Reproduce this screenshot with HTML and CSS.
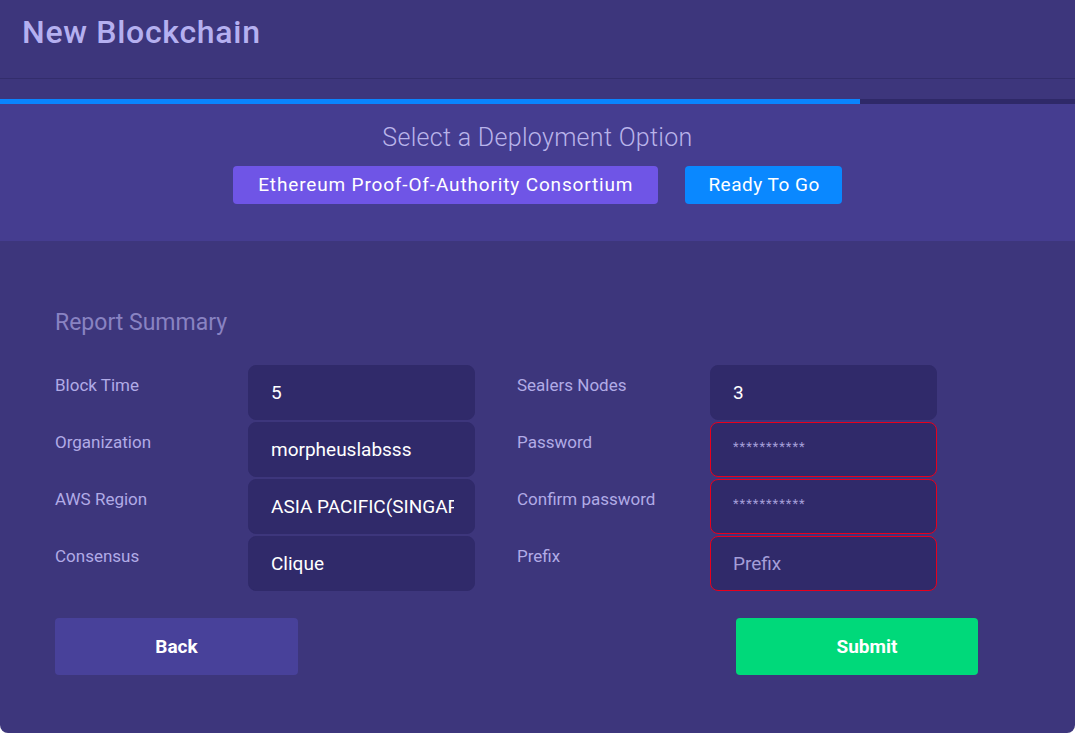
FILE: index.html
```html
<!DOCTYPE html>
<html lang="en">
<head>
    <meta charset="UTF-8">
    <meta name="viewport" content="width=device-width, initial-scale=1.0">
    <title>New Blockchain</title>
    <link rel="stylesheet" href="styles.css">
</head>
<body>
    <div class="modal">
        <div class="modal-header">
            <h1>New Blockchain</h1>
        </div>

        <div class="progress">
            <div class="progress-fill"></div>
        </div>

        <div class="deploy-section">
            <h2>Select a Deployment Option</h2>
            <div class="deploy-options">
                <span class="option option-purple">Ethereum Proof-Of-Authority Consortium</span>
                <span class="option option-blue">Ready To Go</span>
            </div>
        </div>

        <div class="summary">
            <h3>Report Summary</h3>
            <div class="form-grid">
                <div class="form-col">
                    <div class="form-row">
                        <label>Block Time</label>
                        <div class="field"><span class="value">5</span></div>
                    </div>
                    <div class="form-row">
                        <label>Organization</label>
                        <div class="field"><span class="value">morpheuslabsss</span></div>
                    </div>
                    <div class="form-row">
                        <label>AWS Region</label>
                        <div class="field"><span class="value">ASIA PACIFIC(SINGAPORE)</span></div>
                    </div>
                    <div class="form-row">
                        <label>Consensus</label>
                        <div class="field"><span class="value">Clique</span></div>
                    </div>
                </div>
                <div class="form-col">
                    <div class="form-row">
                        <label>Sealers Nodes</label>
                        <div class="field"><span class="value">3</span></div>
                    </div>
                    <div class="form-row">
                        <label>Password</label>
                        <div class="field field-error placeholder stars"><span class="value">***********</span></div>
                    </div>
                    <div class="form-row">
                        <label>Confirm password</label>
                        <div class="field field-error placeholder stars"><span class="value">***********</span></div>
                    </div>
                    <div class="form-row">
                        <label>Prefix</label>
                        <div class="field field-error placeholder"><span class="value">Prefix</span></div>
                    </div>
                </div>
            </div>

            <div class="actions">
                <button class="btn btn-back">Back</button>
                <button class="btn btn-submit">Submit</button>
            </div>
        </div>
    </div>
</body>
</html>
```

FILE: styles.css
```css
body {
    margin: 0;
    padding: 0;
    background-color: #ffffff;
    font-family: Roboto, "Open Sans", sans-serif;
    color: #b1abe6;
}
.modal {
    width: 1075px;
    height: 733px;
    background-color: #3d367c;
    border-radius: 0 0 8px 8px;
    overflow: hidden;
}
.modal-header {
    height: 79px;
    border-bottom: 1px solid #332d6c;
    box-sizing: border-box;
    padding: 13px 22px 0;
}
.modal-header h1 {
    margin: 0;
    font-size: 32px;
    font-weight: 500;
    color: #b5b0f0;
    letter-spacing: 0.7px;
}
.progress {
    margin-top: 20px;
    height: 5px;
    background-color: #2f2968;
}
.progress-fill {
    width: 860px;
    height: 100%;
    background-color: #0a84ff;
}
.deploy-section {
    background-color: #453d90;
    height: 137px;
    box-sizing: border-box;
    padding-top: 18px;
    text-align: center;
}
.deploy-section h2 {
    margin: 0;
    font-size: 25px;
    font-weight: 300;
    color: #b9b4ea;
    letter-spacing: 0.3px;
    line-height: 31px;
}
.deploy-options {
    display: flex;
    justify-content: center;
    gap: 27px;
    margin-top: 13px;
}
.option {
    height: 38px;
    line-height: 38px;
    padding: 0 25px;
    border-radius: 4px;
    color: #ffffff;
    font-size: 19px;
    letter-spacing: 0.85px;
    white-space: nowrap;
}
.option-purple {
    background-color: #6f55e6;
}
.option-blue {
    padding: 0 22px 0 23px;
    letter-spacing: 0.5px;
    background-color: #0a88ff;
}
.summary {
    padding: 68px 55px 0;
}
.summary h3 {
    margin: 0 0 28px;
    font-size: 23px;
    font-weight: 400;
    color: #8983c2;
    line-height: 28px;
}
.form-grid {
    display: flex;
    gap: 42px;
}
.form-col {
    display: flex;
    flex-direction: column;
    gap: 2px;
}
.form-row {
    display: flex;
}
.form-row label {
    width: 193px;
    padding-top: 10px;
    font-size: 17px;
    color: #b1abe6;
}
.field {
    width: 227px;
    height: 55px;
    box-sizing: border-box;
    padding: 0 20px 0 22px;
    line-height: 53px;
    background-color: #302a6a;
    border: 1px solid #302a6a;
    border-radius: 8px;
    color: #ffffff;
    font-size: 19px;
    white-space: nowrap;
}
.field .value {
    display: block;
    overflow: hidden;
}
.field-error {
    border-color: #e8001c;
}
.placeholder {
    color: #a49ed8;
}
.stars {
    font-size: 13px;
    letter-spacing: 1px;
    line-height: 47px;
}
.actions {
    display: flex;
    justify-content: space-between;
    width: 923px;
    margin-top: 27px;
}
.btn {
    width: 243px;
    height: 57px;
    border: none;
    border-radius: 4px;
    color: #ffffff;
    font-family: Roboto, "Open Sans", sans-serif;
    font-size: 19px;
    font-weight: 700;
    cursor: pointer;
}
.btn-back {
    background-color: #48419a;
}
.btn-submit {
    width: 242px;
    padding-left: 26px;
    background-color: #00d97a;
}
```
